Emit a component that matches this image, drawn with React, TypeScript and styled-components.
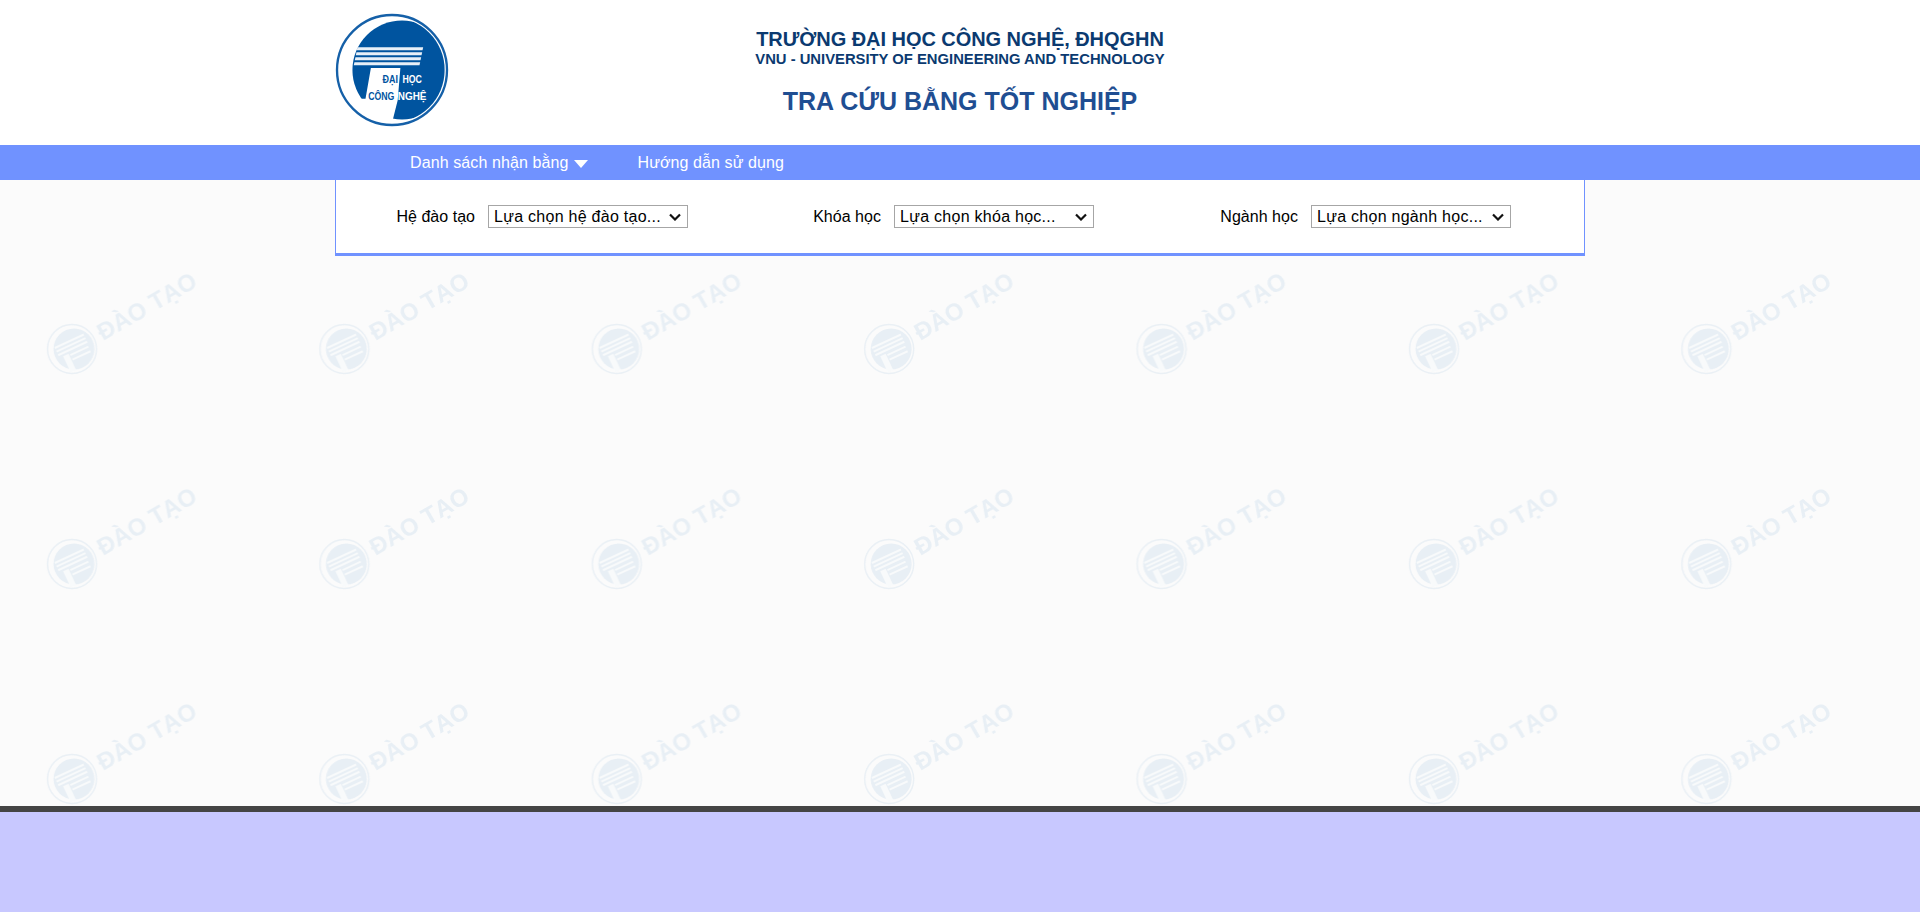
import styled, { createGlobalStyle } from "styled-components";

const fields = [
  { label: "Hệ đào tạo", placeholder: "Lựa chọn hệ đào tạo..." },
  { label: "Khóa học", placeholder: "Lựa chọn khóa học..." },
  { label: "Ngành học", placeholder: "Lựa chọn ngành học..." },
];

const chevron =
  "data:image/svg+xml,%3Csvg xmlns='http://www.w3.org/2000/svg' width='12' height='8'%3E%3Cpath d='M1 1.5l5 5 5-5' fill='none' stroke='%23111' stroke-width='2.2'/%3E%3C/svg%3E";

function SchoolLogo() {
  return (
    <LogoSvg viewBox="45 40 340 340" role="img" aria-label="Đại học Công nghệ">
      <defs>
        <clipPath id="logoDisc">
          <circle cx="215" cy="210" r="157" />
        </clipPath>
      </defs>
      <circle cx="215" cy="210" r="164" fill="#fff" stroke="#1560a8" strokeWidth="7" />
      <g clipPath="url(#logoDisc)">
        <circle cx="245" cy="210" r="148" fill="#00549f" />
        <polygon points="152,204 240,204 232,300 212,380 60,380 60,296 136,296" fill="#fff" />
      </g>
      <g fill="#e8f0f8">
        <polygon points="112,142 308,142 306,151 110,151" />
        <polygon points="109,157 305,157 303,166 107,166" />
        <polygon points="106,172 302,172 300,181 104,181" />
        <polygon points="103,187 299,187 297,196 101,196" />
      </g>
      <LogoText x="187" y="248" fill="#00549f" textLength="46" lengthAdjust="spacingAndGlyphs">
        ĐẠI
      </LogoText>
      <LogoText x="246" y="248" fill="#fff" textLength="58" lengthAdjust="spacingAndGlyphs">
        HỌC
      </LogoText>
      <LogoText x="144" y="299" fill="#00549f" textLength="78" lengthAdjust="spacingAndGlyphs">
        CÔNG
      </LogoText>
      <LogoText x="232" y="299" fill="#fff" textLength="86" lengthAdjust="spacingAndGlyphs">
        NGHỆ
      </LogoText>
    </LogoSvg>
  );
}

function WatermarkLayer() {
  return (
    <WatermarkSvg aria-hidden="true">
      <defs>
        <pattern id="daoTaoMark" x="0" y="-9" width="272.4" height="215" patternUnits="userSpaceOnUse">
          <circle cx="72" cy="178" r="24.5" fill="none" stroke="#eaf0f5" strokeWidth="1.5" />
          <circle cx="74" cy="178" r="20.5" fill="#e8eff5" />
          <g fill="#f8fafb" transform="rotate(-25 74 178)">
            <rect x="57" y="168" width="32" height="2" />
            <rect x="57" y="172" width="32" height="2" />
            <rect x="57" y="176" width="32" height="2" />
            <rect x="68" y="181" width="20" height="2" />
            <rect x="68" y="186" width="20" height="2" />
            <rect x="61" y="180" width="6" height="18" />
          </g>
          <WatermarkText x="103" y="170" transform="rotate(-30 103 170)">
            ĐÀO TẠO
          </WatermarkText>
        </pattern>
      </defs>
      <rect width="100%" height="100%" fill="url(#daoTaoMark)" />
    </WatermarkSvg>
  );
}

export default function App() {
  return (
    <Page>
      <GlobalStyle />
      <Header>
        <HeaderInner>
          <SchoolLogo />
          <Titles>
            <SchoolName>TRƯỜNG ĐẠI HỌC CÔNG NGHỆ, ĐHQGHN</SchoolName>
            <SchoolNameEn>VNU - UNIVERSITY OF ENGINEERING AND TECHNOLOGY</SchoolNameEn>
            <PageTitle>TRA CỨU BẰNG TỐT NGHIỆP</PageTitle>
          </Titles>
        </HeaderInner>
      </Header>
      <Nav>
        <NavInner>
          <NavLink href="#">
            Danh sách nhận bằng
            <Caret />
          </NavLink>
          <NavLink href="#">Hướng dẫn sử dụng</NavLink>
        </NavInner>
      </Nav>
      <Main>
        <WatermarkLayer />
        <FilterPanel>
          {fields.map(field => (
            <Field key={field.label}>
              <FieldLabel>{field.label}</FieldLabel>
              <FieldSelect defaultValue="">
                <option value="">{field.placeholder}</option>
              </FieldSelect>
            </Field>
          ))}
        </FilterPanel>
      </Main>
      <Footer />
    </Page>
  );
}

const GlobalStyle = createGlobalStyle`
  html, body {
    margin: 0;
    padding: 0;
  }

  body {
    font-family: "Liberation Sans", Arial, sans-serif;
    background-color: #fbfbfb;
  }
`;

const Page = styled.div`
  display: flex;
  flex-direction: column;
  min-height: 912px;
`;

const Header = styled.header`
  height: 145px;
  background-color: #fff;
`;

const HeaderInner = styled.div`
  position: relative;
  box-sizing: border-box;
  width: 1250px;
  height: 100%;
  margin: 0 auto;
  padding-top: 13px;
`;

const LogoSvg = styled.svg`
  display: block;
  width: 114px;
  height: 114px;
`;

const LogoText = styled.text`
  font-family: "Liberation Sans", Arial, sans-serif;
  font-size: 32px;
  font-weight: 700;
`;

const Titles = styled.div`
  position: absolute;
  top: 0;
  left: 0;
  right: 0;
  display: flex;
  flex-direction: column;
  align-items: center;
  padding-top: 27px;
`;

const SchoolName = styled.div`
  font-size: 20px;
  line-height: 24px;
  font-weight: 700;
  letter-spacing: -0.05px;
  color: #0b3a70;
`;

const SchoolNameEn = styled.div`
  font-size: 14.8px;
  line-height: 16px;
  font-weight: 700;
  color: #0b3a70;
`;

const PageTitle = styled.h1`
  margin: 19px 0 0;
  font-size: 25px;
  line-height: 30px;
  font-weight: 700;
  color: #1f4e92;
`;

const Nav = styled.nav`
  height: 35px;
  background-color: #7092ff;
`;

const NavInner = styled.div`
  display: flex;
  gap: 49px;
  width: 1250px;
  height: 100%;
  margin: 0 auto;
  padding-left: 75px;
  box-sizing: border-box;
  align-items: center;
`;

const NavLink = styled.a`
  display: flex;
  align-items: center;
  font-size: 16px;
  letter-spacing: 0.1px;
  color: #fff;
  text-decoration: none;
`;

const Caret = styled.span`
  width: 0;
  height: 0;
  margin-left: 6px;
  margin-top: 2px;
  border-left: 7px solid transparent;
  border-right: 7px solid transparent;
  border-top: 8px solid #fff;
`;

const Main = styled.main`
  position: relative;
  flex: 1;
  background-color: #fbfbfb;
`;

const WatermarkSvg = styled.svg`
  position: absolute;
  top: 0;
  left: 0;
  width: 100%;
  height: 100%;
  filter: blur(0.5px);
`;

const WatermarkText = styled.text`
  font-family: "Liberation Sans", Arial, sans-serif;
  font-size: 24px;
  font-weight: 700;
  fill: #e8eff5;
`;

const FilterPanel = styled.section`
  position: relative;
  box-sizing: border-box;
  display: grid;
  grid-template-columns: 352px 406px 417px;
  justify-content: end;
  align-items: center;
  width: 1250px;
  height: 76px;
  margin: 0 auto;
  padding: 0 73px 0 0;
  background-color: #fff;
  border: solid #7092ff;
  border-width: 0 1px 3px;
`;

const Field = styled.label`
  display: flex;
  align-items: center;
  justify-content: flex-end;
  gap: 13px;
`;

const FieldLabel = styled.span`
  font-size: 16px;
  letter-spacing: 0.03px;
  color: #000;
`;

const FieldSelect = styled.select`
  box-sizing: border-box;
  appearance: none;
  width: 200px;
  height: 23px;
  padding: 0 5px;
  font-family: "Liberation Sans", Arial, sans-serif;
  font-size: 16px;
  letter-spacing: 0.27px;
  color: #000;
  background: #fff url("${chevron}") no-repeat right 6px center;
  border: 1px solid #a6a6a6;
  border-radius: 0;
`;

const Footer = styled.footer`
  height: 100px;
  background-color: #c8c8ff;
  border-top: 6px solid #444;
`;
